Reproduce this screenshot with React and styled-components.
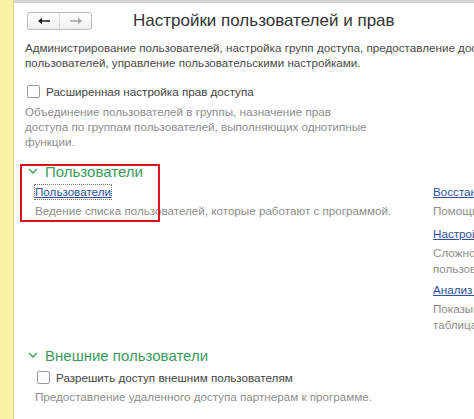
import React from 'react';
import styled, { createGlobalStyle } from 'styled-components';

const GlobalStyle = createGlobalStyle`
    html, body {
        margin: 0;
        padding: 0;
        background: #ffffff;
        overflow: hidden;
    }
    body {
        font-family: "Liberation Sans", Arial, sans-serif;
    }
`;

const App = () => {
    return (
        <Page>
            <GlobalStyle />
            <SideStrip />
            <Main>
                <Header>
                    <NavGroup>
                        <NavButton $first>
                            <Arrow dir="left" />
                        </NavButton>
                        <NavButton>
                            <Arrow dir="right" />
                        </NavButton>
                    </NavGroup>
                    <Title>Настройки пользователей и прав</Title>
                </Header>

                <Content>
                    <Intro>
                        Администрирование пользователей, настройка групп доступа, предоставление доступа внешним
                        <br />
                        пользователей, управление пользовательскими настройками.
                    </Intro>

                    <CheckRow $indent={2} $top={13}>
                        <Checkbox />
                        <Label>Расширенная настройка прав доступа</Label>
                    </CheckRow>
                    <Hint>
                        Объединение пользователей в группы, назначение прав
                        <br />
                        доступа по группам пользователей, выполняющих однотипные
                        <br />
                        функции.
                    </Hint>

                    <Section $top={13}>
                        <Heading>
                            <Chevron />
                            Пользователи
                        </Heading>
                        <Columns>
                            <LeftColumn>
                                <Link $focused>Пользователи</Link>
                                <Note>Ведение списка пользователей, которые работают с программой.</Note>
                            </LeftColumn>
                            <RightColumn>
                                <Item>
                                    <Link>Восстановление доступа</Link>
                                    <Note>Помощь пользователям</Note>
                                </Item>
                                <Item>
                                    <Link>Настройки входа</Link>
                                    <Note>Сложность паролей и</Note>
                                    <Note $tight>пользователей</Note>
                                </Item>
                                <Item>
                                    <Link>Анализ прав доступа</Link>
                                    <Note>Показывает права</Note>
                                    <Note $tight>таблицами</Note>
                                </Item>
                            </RightColumn>
                        </Columns>
                    </Section>

                    <Section $top={14}>
                        <Heading>
                            <Chevron />
                            Внешние пользователи
                        </Heading>
                        <SubBlock>
                            <CheckRow $indent={2} $top={5}>
                                <Checkbox />
                                <Label>Разрешить доступ внешним пользователям</Label>
                            </CheckRow>
                            <Note $gap={4}>Предоставление удаленного доступа партнерам к программе.</Note>
                        </SubBlock>
                    </Section>
                </Content>

                <RedFrame />
            </Main>
        </Page>
    );
};

export default App;

const Arrow = ({ dir }) => (
    <svg width="14" height="8" viewBox="0 0 14 8">
        {dir === 'left' ? (
            <path d="M1 4 L5 0.8 L5 3.2 L13 3.2 L13 4.8 L5 4.8 L5 7.2 Z" fill="#1e1e1e" />
        ) : (
            <path d="M13 4 L9 0.8 L9 3.2 L1 3.2 L1 4.8 L9 4.8 L9 7.2 Z" fill="#a4a4a4" />
        )}
    </svg>
);

const Chevron = () => (
    <svg width="10" height="6" viewBox="0 0 10 6" style={{ marginRight: 7, marginLeft: 3 }}>
        <path d="M1 1 L5 5 L9 1" fill="none" stroke="#3a9a5c" strokeWidth="1.3" />
    </svg>
);

const Page = styled.div`
    display: flex;
    width: 474px;
    height: 419px;
    overflow: hidden;
`;

const SideStrip = styled.div`
    flex: 0 0 13px;
    background: #fbf1a4;
    border-right: 1px solid #e4d98e;
`;

const Main = styled.div`
    position: relative;
    flex: 1;
    border-top: 3px solid #d4d4d4;
    min-width: 0;
`;

const Header = styled.div`
    display: flex;
    align-items: center;
    height: 18px;
    margin-top: 9px;
    padding-left: 13px;
`;

const NavGroup = styled.div`
    display: flex;
    width: 65px;
    height: 18px;
    box-sizing: border-box;
    border: 1px solid #b9b9b9;
    border-radius: 3px;
    background: linear-gradient(#ffffff, #f0f0f0);
`;

const NavButton = styled.div`
    flex: 1;
    display: flex;
    align-items: center;
    justify-content: center;
    border-left: ${(p) => (p.$first ? 'none' : '1px solid #d6d6d6')};
`;

const Title = styled.div`
    margin-left: 41px;
    font-size: 17px;
    color: #333333;
    white-space: nowrap;
`;

const Content = styled.div`
    padding-left: 11px;
    margin-top: 10px;
    width: 620px;
    font-size: 11.65px;
`;

const Intro = styled.div`
    line-height: 15px;
    color: #4a4a4a;
    white-space: nowrap;
`;

const CheckRow = styled.div`
    display: flex;
    align-items: center;
    height: 16px;
    margin-top: ${(p) => p.$top}px;
    padding-left: ${(p) => p.$indent || 0}px;
`;

const Checkbox = styled.span`
    width: 13px;
    height: 13px;
    box-sizing: border-box;
    border: 1px solid #9c9c9c;
    border-radius: 2px;
    background: #ffffff;
    margin-right: 6px;
`;

const Label = styled.span`
    color: #444444;
    white-space: nowrap;
`;

const Hint = styled.div`
    margin-top: 5px;
    line-height: 15px;
    color: #8d8d8d;
    white-space: nowrap;
`;

const Section = styled.div`
    margin-top: ${(p) => p.$top}px;
`;

const Heading = styled.div`
    display: flex;
    align-items: center;
    height: 18px;
    font-size: 15px;
    color: #3a9a5c;
    white-space: nowrap;
`;

const Columns = styled.div`
    display: flex;
    margin-top: 4px;
    padding-left: 10px;
`;

const LeftColumn = styled.div`
    flex: 0 0 398px;
`;

const RightColumn = styled.div`
    display: flex;
    flex-direction: column;
    gap: 6.5px;
    white-space: nowrap;
`;

const Item = styled.div``;

const Link = styled.div`
    display: inline-block;
    line-height: 14px;
    color: #2d52a0;
    text-decoration: underline;
    white-space: nowrap;
    outline: ${(p) => (p.$focused ? '1px dotted #7a7a7a' : 'none')};
    margin: 1px 0;
`;

const Note = styled.div`
    margin-top: ${(p) => (p.$tight ? 0 : p.$gap ?? 3)}px;
    line-height: ${(p) => (p.$tight ? 15 : 16)}px;
    color: #8d8d8d;
    white-space: nowrap;
`;

const SubBlock = styled.div`
    padding-left: 10px;
`;

const RedFrame = styled.div`
    position: absolute;
    left: 6px;
    top: 161px;
    width: 140px;
    height: 58px;
    box-sizing: border-box;
    border: 2px solid #d8121e;
`;
